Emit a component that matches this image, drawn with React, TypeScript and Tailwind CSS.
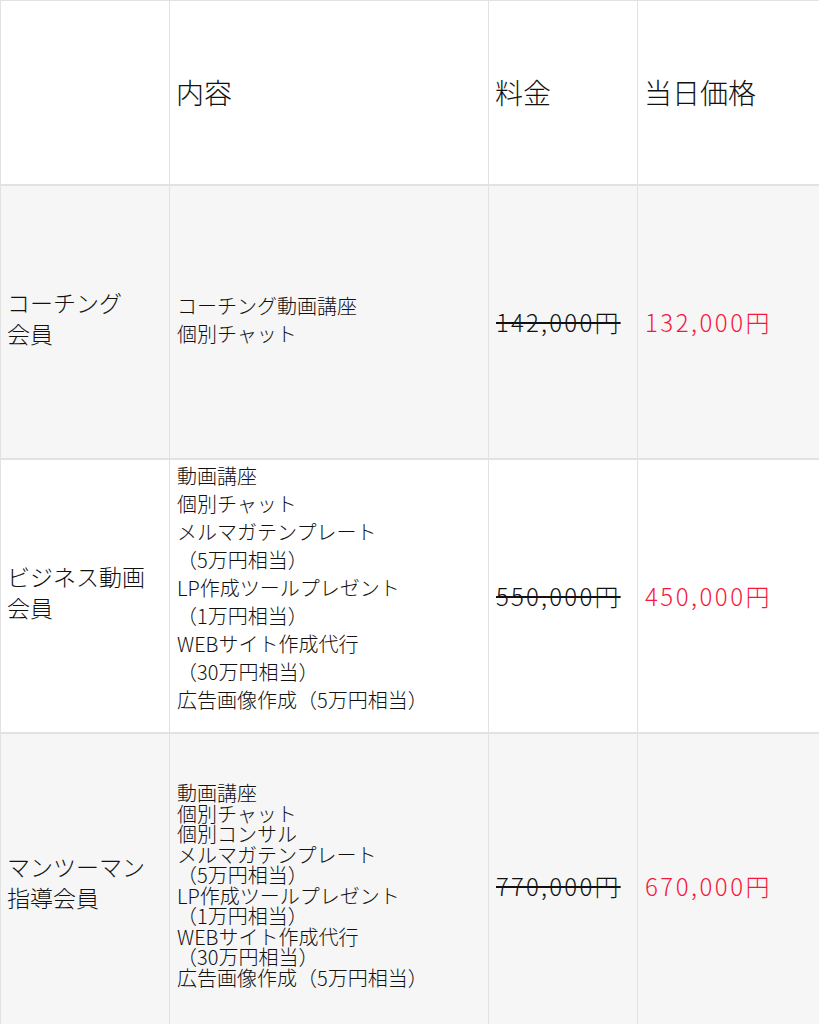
import React from 'react';

type Plan = {
  name: string[];
  items: string[];
  price: string;
  sale: string;
  height: string;
  itemsClass: string;
  shaded?: boolean;
};

const plans: Plan[] = [
  {
    name: ['コーチング', '会員'],
    items: ['コーチング動画講座', '個別チャット'],
    price: '142,000円',
    sale: '132,000円',
    height: 'h-[274px]',
    itemsClass: 'leading-[28px] pb-1',
    shaded: true,
  },
  {
    name: ['ビジネス動画', '会員'],
    items: [
      '動画講座',
      '個別チャット',
      'メルマガテンプレート',
      '（5万円相当）',
      'LP作成ツールプレゼント',
      '（1万円相当）',
      'WEBサイト作成代行',
      '（30万円相当）',
      '広告画像作成（5万円相当）',
    ],
    price: '550,000円',
    sale: '450,000円',
    height: 'h-[274px]',
    itemsClass: 'leading-[28px] pb-4',
  },
  {
    name: ['マンツーマン', '指導会員'],
    items: [
      '動画講座',
      '個別チャット',
      '個別コンサル',
      'メルマガテンプレート',
      '（5万円相当）',
      'LP作成ツールプレゼント',
      '（1万円相当）',
      'WEBサイト作成代行',
      '（30万円相当）',
      '広告画像作成（5万円相当）',
    ],
    price: '770,000円',
    sale: '670,000円',
    height: 'h-[306px]',
    itemsClass: 'leading-[20.5px]',
    shaded: true,
  },
];

export default function App() {
  return (
    <div className="w-[819px] overflow-hidden bg-white font-['Noto_Sans_CJK_JP','Noto_Sans',sans-serif] font-light text-[#111]">
      <table className="w-[820px] table-fixed border-collapse">
        <colgroup>
          <col className="w-[169px]" />
          <col className="w-[319px]" />
          <col className="w-[149px]" />
          <col className="w-[183px]" />
        </colgroup>
        <thead>
          <tr className="h-[184px] border-b-2 border-[#e2e2e2]">
            <th className="border border-[#e2e2e2]" />
            <th className="border border-[#e2e2e2] pl-[6px] text-left align-middle text-[28px] font-light">内容</th>
            <th className="border border-[#e2e2e2] pl-[6px] text-left align-middle text-[28px] font-light">料金</th>
            <th className="border border-[#e2e2e2] pl-[6px] text-left align-middle text-[28px] font-light">当日価格</th>
          </tr>
        </thead>
        <tbody>
          {plans.map((p) => (
            <tr
              key={p.price}
              className={`${p.height} border-b-2 border-[#e2e2e2] ${p.shaded ? 'bg-[#f6f6f6]' : 'bg-white'}`}
            >
              <td className="border border-[#e2e2e2] pl-[6px] pb-2 align-middle text-[23px] leading-[31px]">
                {p.name.map((n) => (
                  <div key={n}>{n}</div>
                ))}
              </td>
              <td className={`border border-[#e2e2e2] pl-[7px] align-middle text-[20px] ${p.itemsClass}`}>
                {p.items.map((it, i) => (
                  <div key={i} className="whitespace-nowrap">{it}</div>
                ))}
              </td>
              <td className="border border-[#e2e2e2] pl-[7px] align-middle text-[24px] tracking-[2.2px]">
                <span className="line-through decoration-[1.5px]">{p.price}</span>
              </td>
              <td className="border border-[#e2e2e2] pl-[7px] align-middle text-[24px] tracking-[2.5px] text-[#f8173b]">
                {p.sale}
              </td>
            </tr>
          ))}
        </tbody>
      </table>
    </div>
  );
}
